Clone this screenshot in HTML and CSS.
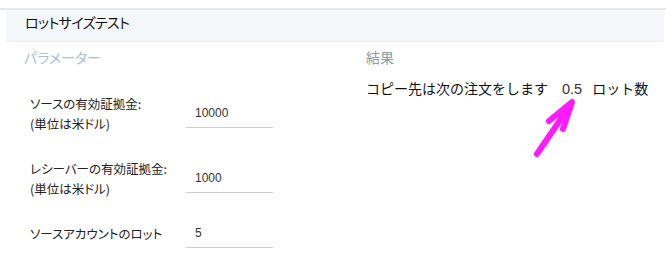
FILE: index.html
```html
<!DOCTYPE html>
<html lang="ja">
<head>
<meta charset="utf-8">
<link rel="stylesheet" href="styles.css">
</head>
<body>
<div class="page">
  <div class="topline"></div>
  <header class="bar"><h1 class="title">ロットサイズテスト</h1></header>
  <main class="content">
    <section class="params">
      <h2 class="section-head params-head">パラメーター</h2>
      <div class="form">
        <div class="row">
          <label class="label">ソースの有効証拠金:<br>(単位は米ドル)</label>
          <div class="field">10000</div>
        </div>
        <div class="row">
          <label class="label">レシーバーの有効証拠金:<br>(単位は米ドル)</label>
          <div class="field">1000</div>
        </div>
        <div class="row single">
          <label class="label">ソースアカウントのロット</label>
          <div class="field">5</div>
        </div>
      </div>
    </section>
    <section class="result">
      <h2 class="section-head result-head">結果</h2>
      <p class="result-line">コピー先は次の注文をします<span class="num">0.5</span>ロット数</p>
    </section>
  </main>
  <svg class="arrow" width="666" height="260" viewBox="0 0 666 260">
    <g stroke="#ff1aff" stroke-width="6" stroke-linecap="round" stroke-linejoin="round" fill="none">
      <line x1="537" y1="154" x2="571" y2="104"/>
      <polyline points="549,121 572,102 563,129"/>
    </g>
  </svg>
</div>
</body>
</html>
```

FILE: styles.css
```css
html, body {
  margin: 0;
  padding: 0;
  background: #ffffff;
}
body {
  font-family: "Noto Sans CJK JP", "Liberation Sans", sans-serif;
  font-feature-settings: "palt";
  color: #1a1a1a;
  width: 666px;
  height: 260px;
  overflow: hidden;
}
.page {
  position: relative;
  width: 666px;
  height: 260px;
}
.topline {
  height: 8px;
  border-bottom: 2px solid #e6e9ec;
}
.bar {
  margin-left: 6px;
  margin-right: 2px;
  height: 31px;
  background: #f4f7fa;
  border-bottom: 1px solid #eef1f4;
}
.title {
  margin: 0;
  padding: 2px 0 0 19px;
  font-size: 14px;
  font-weight: 400;
  line-height: 20px;
  letter-spacing: -0.6px;
  color: #111;
}
.content {
  display: grid;
  grid-template-columns: 342px 1fr;
  padding-left: 24px;
}
.section-head {
  margin: 0;
  font-size: 14px;
  font-weight: 400;
  line-height: 20px;
}
.params-head {
  margin-top: 5px;
  color: #a9c0d4;
}
.result-head {
  margin-top: 5px;
  color: #8d9aa6;
}
.form {
  margin-top: 27px;
  padding-left: 6px;
  display: flex;
  flex-direction: column;
}
.row {
  display: grid;
  grid-template-columns: 156px 87px;
  align-items: center;
}
.row + .row {
  margin-top: 25px;
}
.row + .row.single {
  margin-top: 21px;
}
.label {
  font-size: 12.5px;
  line-height: 20px;
  color: #222;
}
.field {
  height: 27px;
  line-height: 27px;
  padding-left: 9px;
  border-bottom: 1px solid #c9cdd1;
  font-family: "Liberation Sans", sans-serif;
  font-size: 12px;
  color: #333;
}
.result-line {
  margin: 11px 0 0 0;
  font-size: 14px;
  line-height: 20px;
  font-feature-settings: normal;
  color: #111;
}
.num {
  font-family: "Liberation Sans", sans-serif;
  font-size: 14.5px;
  color: #333;
  margin: 0 10px 0 14px;
}
.arrow {
  position: absolute;
  left: 0;
  top: 0;
  pointer-events: none;
}
```
